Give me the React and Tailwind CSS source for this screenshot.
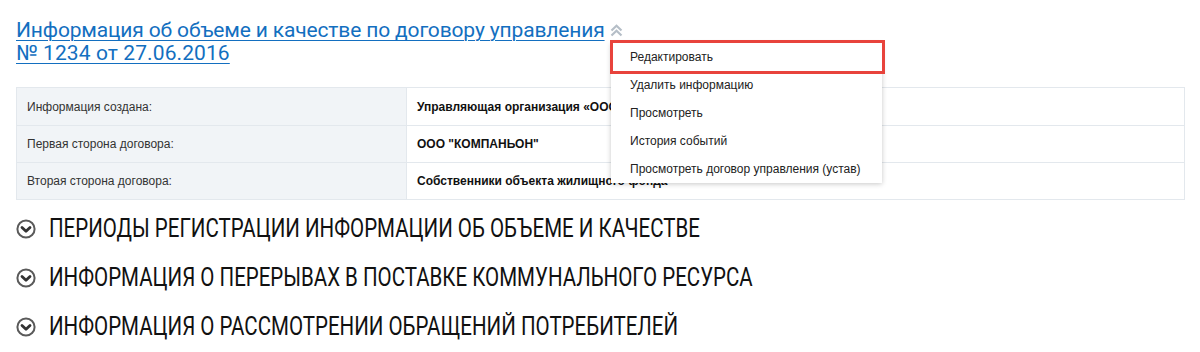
import React from 'react';

const ROWS = [
  { label: 'Информация создана:', value: 'Управляющая организация «ООО "КОМПАНЬОН"»' },
  { label: 'Первая сторона договора:', value: 'ООО "КОМПАНЬОН"' },
  { label: 'Вторая сторона договора:', value: 'Собственники объекта жилищного фонда' },
];

const MENU = [
  'Редактировать',
  'Удалить информацию',
  'Просмотреть',
  'История событий',
  'Просмотреть договор управления (устав)',
];

const SECTIONS = [
  'Периоды регистрации информации об объеме и качестве',
  'Информация о перерывах в поставке коммунального ресурса',
  'Информация о рассмотрении обращений потребителей',
];

function DoubleChevronUp() {
  return (
    <svg width="13" height="13" viewBox="0 0 13 13" className="inline-block">
      <path d="M1.5 6.5 L6.5 1.8 L11.5 6.5" fill="none" stroke="#b5bec7" strokeWidth="2.2" />
      <path d="M1.5 11.5 L6.5 6.8 L11.5 11.5" fill="none" stroke="#b5bec7" strokeWidth="2.2" />
    </svg>
  );
}

function CircleChevron() {
  return (
    <svg width="20" height="20" viewBox="0 0 20 20" className="shrink-0">
      <circle cx="10" cy="10" r="8.6" fill="#fff" stroke="#5a5a5a" strokeWidth="2" />
      <path d="M6 8.4 L10 12.3 L14 8.4" fill="none" stroke="#333" strokeWidth="2.8" strokeLinecap="round" strokeLinejoin="round" />
    </svg>
  );
}

export default function App() {
  return (
    <div className="w-[1200px] h-[352px] bg-white px-4 pt-[18px] overflow-hidden" style={{ fontFamily: 'Roboto, "Noto Sans", sans-serif' }}>
      {/* Header with dropdown */}
      <div className="relative">
        <h1 className="text-[21px] leading-[23px] text-[#136fc0] font-normal">
          <span className="underline underline-offset-[3px] decoration-1 tracking-[-0.15px]">
            Информация об объеме и качестве по договору управления
          </span>
          <span className="ml-[5px] align-[1px]"><DoubleChevronUp /></span>
          <br />
          <span className="underline underline-offset-[3px] decoration-1 tracking-[0.1px]">№ 1234 от 27.06.2016</span>
        </h1>

        <div
          className="absolute left-[595px] top-[25px] w-[271px] bg-white shadow-[0_1px_5px_rgba(0,0,0,0.22)] z-10"
          style={{ fontFamily: '"Liberation Sans", Arial, sans-serif' }}
        >
          {MENU.map((item) => (
            <div key={item} className="h-[28px] flex items-center pl-[19px] text-[12px] text-[#222]">
              {item}
            </div>
          ))}
          <div className="absolute -left-[1px] -top-[3px] -right-[3px] h-[34px] border-[3px] border-[#e8433c]" />
        </div>
      </div>

      {/* Info table */}
      <div className="mt-[22px] w-[1169px] border border-[#e3e8ed]" style={{ fontFamily: '"Liberation Sans", Arial, sans-serif' }}>
        {ROWS.map((row, i) => (
          <div key={row.label} className={'flex h-[37px] ' + (i > 0 ? 'border-t border-[#e3e8ed]' : '')}>
            <div className="w-[390px] bg-[#f1f4f7] border-r border-[#e3e8ed] flex items-center pl-[10px] text-[12px] text-[#333]">
              {row.label}
            </div>
            <div className="flex-1 flex items-center pl-[10px] text-[12px] font-bold text-[#111]">
              {row.value}
            </div>
          </div>
        ))}
      </div>

      {/* Collapsible sections */}
      <div className="mt-[4px] flex flex-col">
        {SECTIONS.map((s) => (
          <div key={s} className="h-[49px] flex items-center gap-[13px]">
            <CircleChevron />
            <span className="uppercase text-[25px] text-[#111] whitespace-nowrap origin-left scale-x-[0.82]">{s}</span>
          </div>
        ))}
      </div>
    </div>
  );
}
